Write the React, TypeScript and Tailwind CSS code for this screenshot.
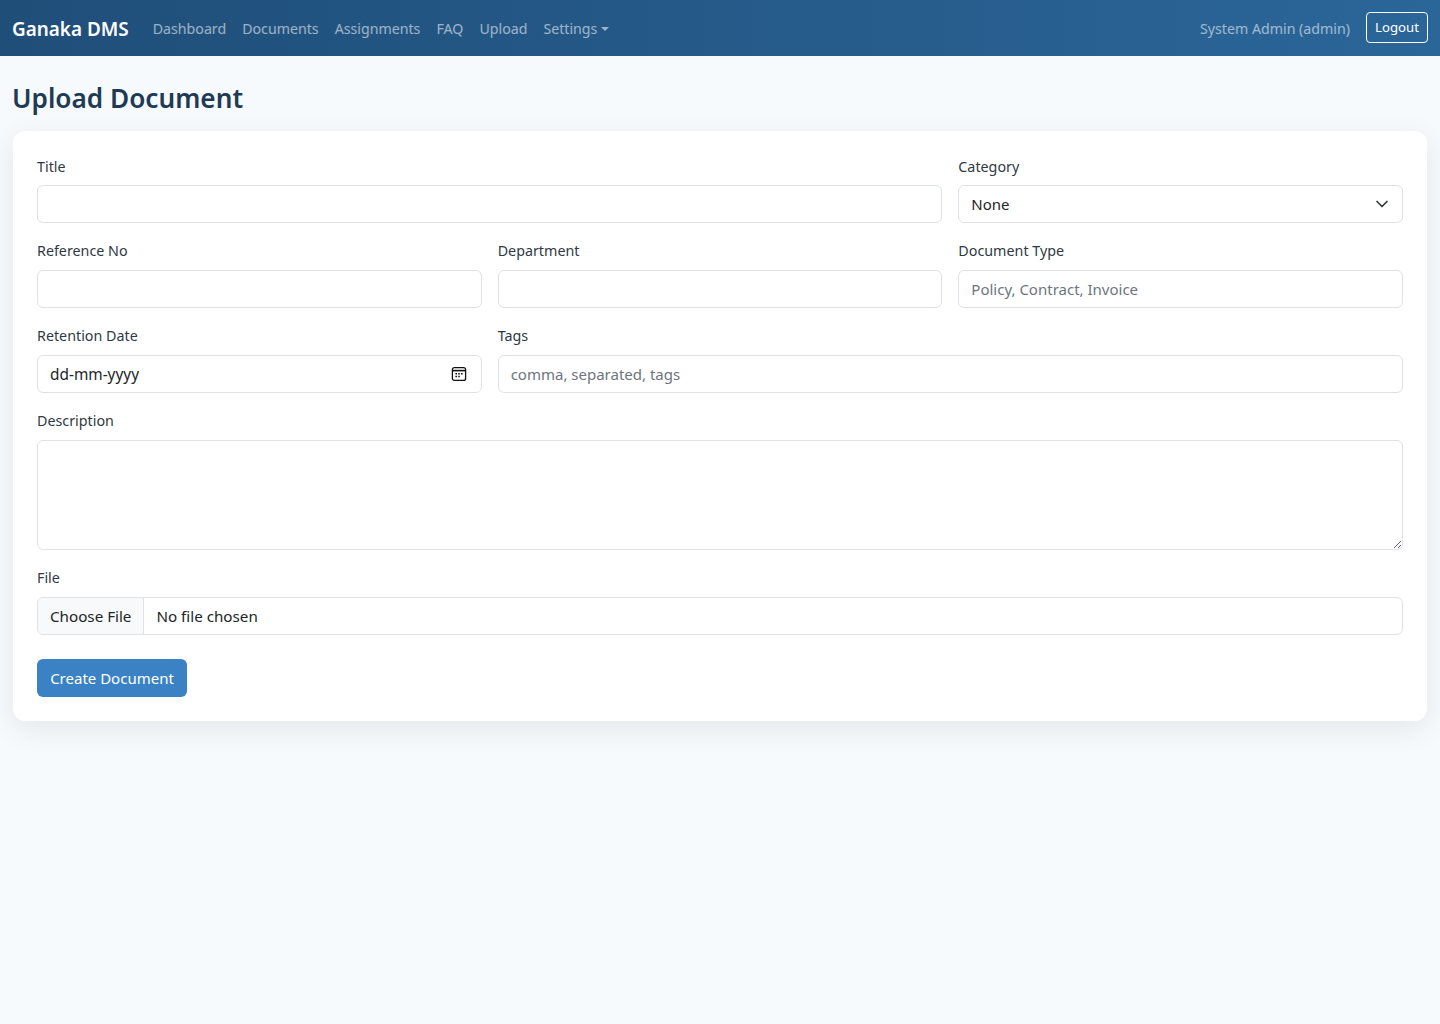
const navLinks = ["Dashboard", "Documents", "Assignments", "FAQ", "Upload"];

const inputClass =
    "block h-[38px] w-full rounded-[6px] border border-[#dee2e6] bg-white px-3 text-[15px] text-[#212529] outline-none placeholder:text-[#6c757d]";

function Field({
    label,
    children,
    className,
    first,
}: {
    label: string;
    children: React.ReactNode;
    className: string;
    first?: boolean;
}) {
    return (
        <div className={className}>
            <label className={`block text-[14.3px] leading-[23px] text-[#2f3943] ${first ? "mb-[7px]" : "mb-2"}`}>
                {label}
            </label>
            {children}
        </div>
    );
}

function CalendarIcon() {
    return (
        <svg width="16" height="16" viewBox="0 0 16 16" fill="none" className="mr-[2px] shrink-0">
            <rect x="1.4" y="1.6" width="13.2" height="12.8" rx="2" stroke="#111" strokeWidth="1.3" />
            <path d="M1.4 4.6h13.2" stroke="#111" strokeWidth="1.6" />
            <path d="M4.4 7.8h1.6M7.2 7.8h1.6M10 7.8h1.6M4.4 10.6h1.6M7.2 10.6h1.6" stroke="#111" strokeWidth="1.5" />
        </svg>
    );
}

function SelectChevron() {
    return (
        <svg width="16" height="16" viewBox="0 0 16 16" fill="none" className="shrink-0">
            <path d="M3 5.5 8 10.5 13 5.5" stroke="#343a40" strokeWidth="1.7" strokeLinecap="round" strokeLinejoin="round" />
        </svg>
    );
}

export default function App() {
    return (
        <div className="min-h-[1024px] bg-[#f6fafd] font-['Noto_Sans',sans-serif] text-[15px] text-[#212529]">
            {/* Navbar */}
            <nav className="flex h-14 items-center justify-between bg-gradient-to-r from-[#1f4e79] to-[#2b6699] px-3">
                <div className="flex items-center pt-[2px]">
                    <a className="mr-4 text-[18.9px] leading-7 font-semibold text-white">Ganaka DMS</a>
                    {navLinks.map((link) => (
                        <a key={link} className="px-2 text-[14.2px] text-white/55">
                            {link}
                        </a>
                    ))}
                    <a className="flex items-center px-2 text-[14.2px] text-white/55">
                        Settings
                        <span className="ml-1 border-x-[4px] border-t-[4px] border-x-transparent border-t-white/55" />
                    </a>
                </div>
                <div className="flex items-center gap-4">
                    <span className="pt-[2px] text-[14.2px] text-white/55">System Admin (admin)</span>
                    <button className="mb-[1px] h-[31px] w-[62px] rounded-[4px] border border-white text-[13.2px] text-white">
                        Logout
                    </button>
                </div>
            </nav>

            {/* Page */}
            <main className="px-[13px] pt-[25px]">
                <h1 className="mb-[15px] -ml-[1px] text-[26.2px] leading-[35px] font-semibold text-[#1f3a55]">
                    Upload Document
                </h1>

                <div className="rounded-xl bg-white p-6 shadow-[0_8px_30px_rgba(0,0,0,0.08)]">
                    <div className="grid grid-cols-3 gap-4">
                        <Field label="Title" className="col-span-2" first>
                            <input className={inputClass} />
                        </Field>
                        <Field label="Category" className="col-span-1" first>
                            <div className={`${inputClass} flex items-center justify-between`}>
                                <span>None</span>
                                <SelectChevron />
                            </div>
                        </Field>

                        <Field label="Reference No" className="col-span-1">
                            <input className={inputClass} />
                        </Field>
                        <Field label="Department" className="col-span-1">
                            <input className={inputClass} />
                        </Field>
                        <Field label="Document Type" className="col-span-1">
                            <input className={inputClass} placeholder="Policy, Contract, Invoice" />
                        </Field>

                        <Field label="Retention Date" className="col-span-1">
                            <div className={`${inputClass} flex items-center justify-between`}>
                                <span className="pt-[2px] text-[15.4px]">dd-mm-yyyy</span>
                                <CalendarIcon />
                            </div>
                        </Field>
                        <Field label="Tags" className="col-span-2">
                            <input className={inputClass} placeholder="comma, separated, tags" />
                        </Field>

                        <Field label="Description" className="col-span-3">
                            <textarea className="block h-[110px] w-full rounded-[6px] border border-[#dee2e6] bg-white px-3 py-[6px] outline-none" />
                        </Field>

                        <Field label="File" className="col-span-3">
                            <div className="flex h-[38px] w-full items-center overflow-hidden rounded-[6px] border border-[#dee2e6] bg-white text-[15.2px]">
                                <span className="flex h-full items-center border-r border-[#dee2e6] bg-[#f8f9fa] px-3">
                                    Choose File
                                </span>
                                <span className="pl-3">No file chosen</span>
                            </div>
                        </Field>
                    </div>

                    <button className="mt-6 block h-[38px] w-[150px] rounded-[6px] bg-[#3b82c4] text-white">
                        Create Document
                    </button>
                </div>
            </main>
        </div>
    );
}
